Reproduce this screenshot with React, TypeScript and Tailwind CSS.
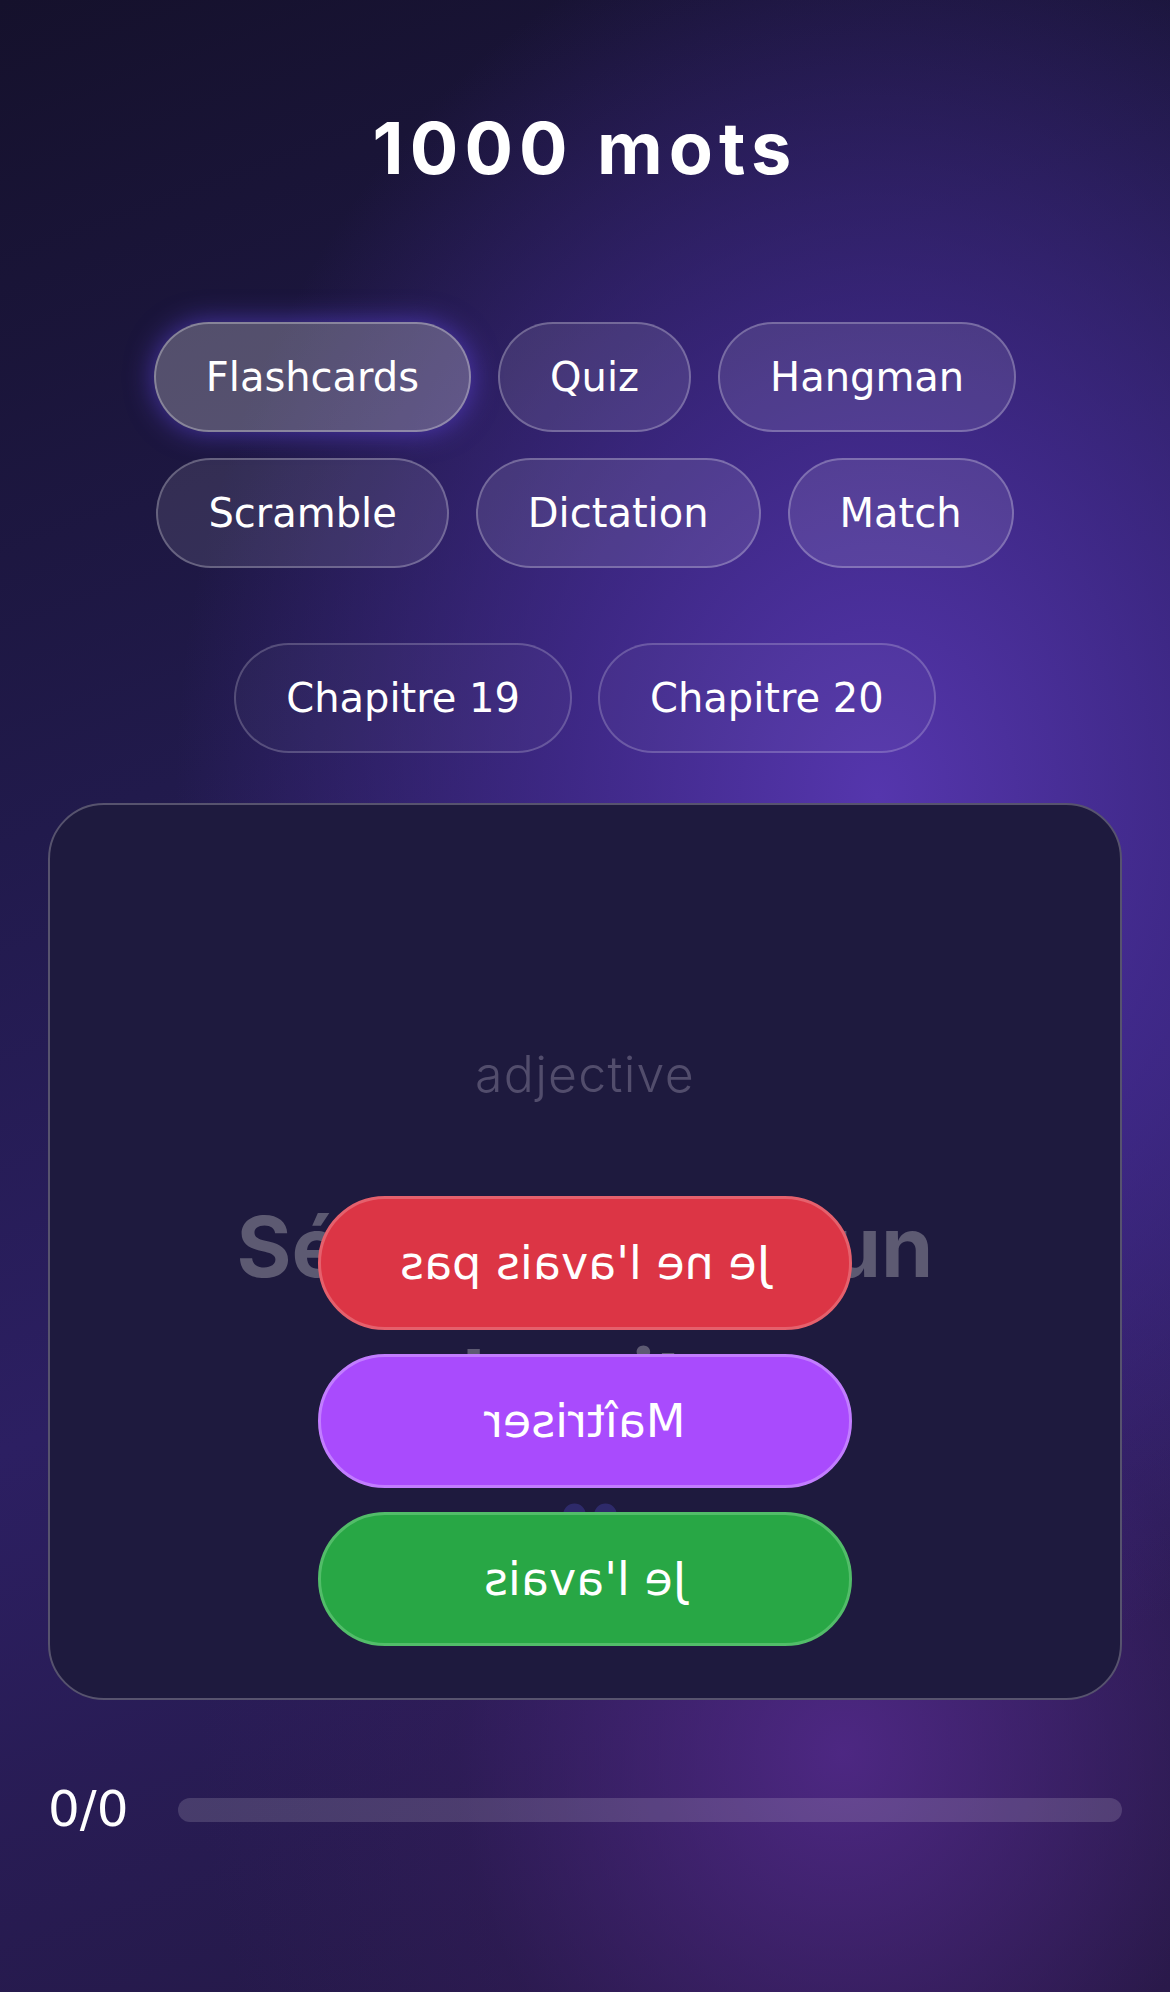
import { useState } from 'react'

const modes = ['Flashcards', 'Quiz', 'Hangman', 'Scramble', 'Dictation', 'Match']
const chapters = ['Chapitre 19', 'Chapitre 20']

const dejavu = "font-['DejaVu_Sans',sans-serif]"

export default function App() {
  const [mode, setMode] = useState('Flashcards')
  const [chapter, setChapter] = useState<string | null>(null)

  return (
    <div className="min-h-screen w-full overflow-hidden bg-[radial-gradient(ellipse_60%_45%_at_75%_40%,#5536ad_0%,rgba(70,44,150,0.75)_45%,rgba(40,28,90,0)_100%),radial-gradient(ellipse_55%_35%_at_72%_88%,rgba(84,42,140,0.85)_0%,rgba(60,30,100,0.3)_60%,rgba(40,20,80,0)_100%),linear-gradient(160deg,#15112c_0%,#211a4c_35%,#2c1f62_60%,#22173f_100%)] px-[48px] text-white">
      <h1 className="pt-[112px] text-center font-['Inter',sans-serif] text-[72px] leading-none font-bold tracking-[0.085em]">
        1000 mots
      </h1>

      <div className={`mt-[138px] flex flex-wrap justify-center gap-x-[27px] gap-y-[26px] ${dejavu}`}>
        {modes.map((m) => (
          <button
            key={m}
            onClick={() => setMode(m)}
            className={
              'flex h-[110px] items-center rounded-full border-2 px-[50px] text-[40px] leading-none ' +
              (mode === m
                ? 'border-white/30 bg-white/25 shadow-[0_0_28px_rgba(110,80,255,0.55)]'
                : 'border-white/25 bg-white/10')
            }
          >
            {m}
          </button>
        ))}
      </div>

      <div className={`mt-[75px] flex justify-center gap-[26px] ${dejavu}`}>
        {chapters.map((c) => (
          <button
            key={c}
            onClick={() => setChapter(c)}
            className={
              'flex h-[110px] items-center rounded-full border-2 px-[50px] text-[40px] leading-none ' +
              (chapter === c ? 'border-white/40 bg-white/15' : 'border-white/20 bg-white/[0.03]')
            }
          >
            {c}
          </button>
        ))}
      </div>

      <div className="relative mt-[50px] h-[897px] rounded-[56px] border-2 border-[#57536e] bg-[#1e1a3e]">
        <div className="flex flex-col items-center pt-[244px] font-['Inter',sans-serif]">
          <p className="text-[50px] leading-none font-light tracking-wide text-[#524d6c]">adjective</p>
          <p className="mt-[81px] text-center text-[84px] leading-[133px] font-bold text-[#5d5a72]">
            Sécurisé pour un
            <br />
            enlevait un
          </p>
          <p className={`mt-[39px] text-[64px] leading-none font-bold tracking-[-10px] text-[#2e2a6a] ${dejavu}`}>••</p>
        </div>

        {/* answer buttons sit over the card text */}
        <div className={`absolute bottom-[52px] left-1/2 flex w-[534px] -translate-x-1/2 flex-col gap-[24px] ${dejavu}`}>
          <button className="flex h-[134px] items-center justify-center rounded-full border-[3px] border-[#e5606c] bg-[#dc3545] text-[46px]">
            <span className="inline-block -scale-x-100">Je ne l'avais pas</span>
          </button>
          <button className="flex h-[134px] items-center justify-center rounded-full border-[3px] border-[#c27dff] bg-[#a94bfd] text-[46px]">
            <span className="inline-block -scale-x-100">Maîtriser</span>
          </button>
          <button className="flex h-[134px] items-center justify-center rounded-full border-[3px] border-[#52bd69] bg-[#28a745] text-[46px]">
            <span className="inline-block -scale-x-100">Je l'avais</span>
          </button>
        </div>
      </div>

      <div className={`mt-[72px] flex items-center gap-[50px] ${dejavu}`}>
        <span className="text-[50px]">0/0</span>
        <div className="h-[24px] flex-1 rounded-full bg-white/15" />
      </div>
    </div>
  )
}
